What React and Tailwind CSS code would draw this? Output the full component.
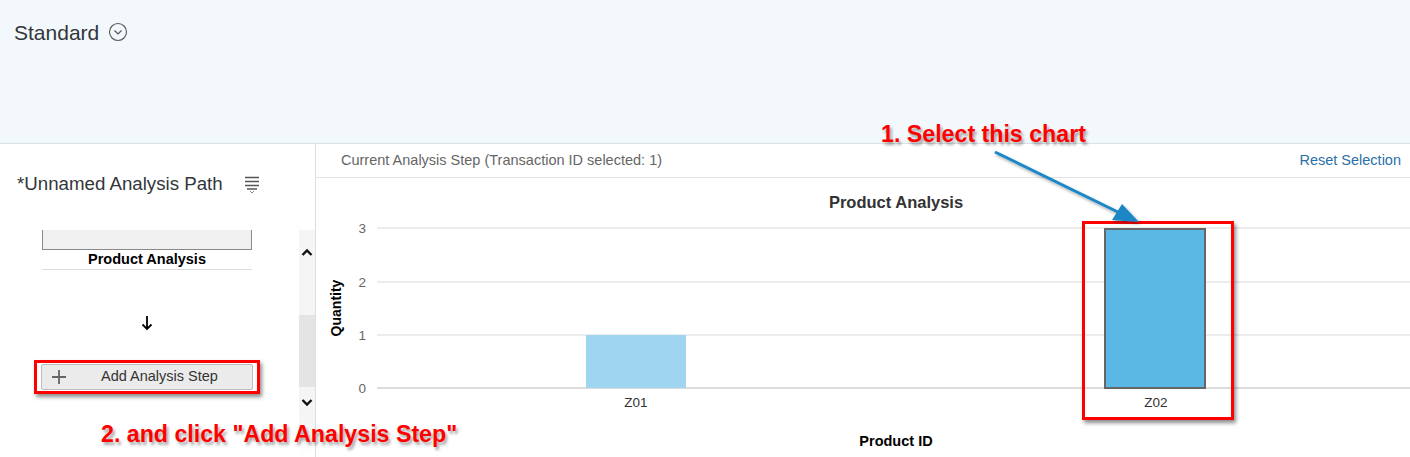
import React from 'react';

const font = "font-['Liberation_Sans',Arial,sans-serif]";

function ChevronCircle() {
  return (
    <svg width="20" height="20" viewBox="0 0 20 20" className="mt-[-2px]">
      <circle cx="10" cy="10" r="8.5" fill="none" stroke="#555" strokeWidth="1.1" />
      <path d="M6.5 8.5 L10 12 L13.5 8.5" fill="none" stroke="#555" strokeWidth="1.2" />
    </svg>
  );
}

function MenuIcon() {
  return (
    <svg width="16" height="18" viewBox="0 0 16 18">
      <path d="M1 1.5 H15 M1 5.5 H15 M1 9.5 H15 M3 13 H13" stroke="#555" strokeWidth="1.6" />
      <path d="M6 15 L8 17 L10 15" fill="none" stroke="#888" strokeWidth="1" />
    </svg>
  );
}

function Chart() {
  const grid = [
    { y: 50, v: '3' },
    { y: 104, v: '2' },
    { y: 157, v: '1' },
    { y: 210, v: '0' },
  ];
  return (
    <svg width="1094" height="279" className="block" fontFamily="'Liberation Sans', Arial, sans-serif">
      <text x="580" y="30" textAnchor="middle" fontSize="16.5" fontWeight="bold" fill="#333">Product Analysis</text>
      {grid.map(g => (
        <g key={g.v}>
          <line x1="61" x2="1094" y1={g.y} y2={g.y} stroke={g.v === '0' ? '#d0d0d0' : '#e6e6e6'} strokeWidth="1.5" />
          <text x="50" y={g.y + 5} textAnchor="end" fontSize="13.5" fill="#666">{g.v}</text>
        </g>
      ))}
      <rect x="270" y="157" width="100" height="53" fill="#9fd5f0" />
      <rect x="789" y="51" width="100" height="159" fill="#5bb8e4" stroke="#666" strokeWidth="2" />
      <text x="320" y="229" textAnchor="middle" fontSize="13.5" fill="#333">Z01</text>
      <text x="840" y="229" textAnchor="middle" fontSize="13.5" fill="#333">Z02</text>
      <text x="0" y="0" transform="translate(25 130) rotate(-90)" textAnchor="middle" fontSize="14" fontWeight="bold" fill="#000">Quantity</text>
      <text x="580" y="268" textAnchor="middle" fontSize="14.5" fontWeight="bold" fill="#000">Product ID</text>
    </svg>
  );
}

export default function App() {
  return (
    <div className={`relative w-[1410px] h-[457px] overflow-hidden bg-white ${font}`}>
      {/* header */}
      <div className="h-[144px] bg-[#f2f8fb] border-b border-[#dbe2e6] pl-[14px] pt-[21px]">
        <div className="flex items-center gap-[9px]">
          <span className="text-[21px] leading-[24px] text-[#32363a]">Standard</span>
          <ChevronCircle />
        </div>
      </div>

      <div className="flex h-[313px]">
        {/* left: analysis path */}
        <div className="w-[316px] border-r border-[#dedede] flex flex-col">
          <div className="pl-[17px] pt-[28px] flex items-center">
            <span className="text-[18.7px] leading-[24px] text-[#32363a]">*Unnamed Analysis Path</span>
            <span className="ml-[21px] mt-[2px]"><MenuIcon /></span>
          </div>
          <div className="mt-[34px] flex flex-1">
            <div className="flex-1 pl-[42px]">
              <div className="w-[210px] flex flex-col items-center">
                <div className="w-full h-[20px] bg-[#f0f0f0] border-x border-b border-[#8a8a8a]" />
                <div className="w-full h-[20px] border-b border-[#dddddd] text-center text-[14.5px] leading-[19px] font-bold text-black">
                  Product Analysis
                </div>
                <svg width="12" height="16" viewBox="0 0 12 16" className="mt-[45px]">
                  <path d="M6 1 V14 M1.5 9.5 L6 14 L10.5 9.5" fill="none" stroke="#000" strokeWidth="1.8" />
                </svg>
                <button className="mt-[33px] w-[212px] h-[26px] flex items-center bg-[#ebebeb] border border-[#bdbdbd] rounded-[2px] text-[14.5px] text-[#333]">
                  <svg width="16" height="16" viewBox="0 0 16 16" className="ml-[9px]">
                    <path d="M8 1 V15 M1 8 H15" stroke="#666" strokeWidth="1.8" />
                  </svg>
                  <span className="ml-[34px]">Add Analysis Step</span>
                </button>
              </div>
            </div>
            <div className="w-[16px] flex flex-col">
              <div className="h-[44px] bg-[#f5f5f5] flex items-center justify-center">
                <svg width="12" height="8" viewBox="0 0 12 8">
                  <path d="M1.5 7 L6 2.5 L10.5 7" fill="none" stroke="#111" strokeWidth="2.4" />
                </svg>
              </div>
              <div className="h-[41px] bg-[#f5f5f5]" />
              <div className="h-[72px] bg-[#e4e4e4]" />
              <div className="h-[32px] bg-[#f5f5f5] flex items-center justify-center">
                <svg width="12" height="8" viewBox="0 0 12 8">
                  <path d="M1.5 1 L6 5.5 L10.5 1" fill="none" stroke="#111" strokeWidth="2.4" />
                </svg>
              </div>
              <div className="flex-1 bg-gradient-to-b from-[#f5f5f5] to-white" />
            </div>
          </div>
        </div>

        {/* right: current step */}
        <div className="flex-1 flex flex-col">
          <div className="h-[34px] border-b border-[#e2e2e2] flex items-center justify-between pl-[25px] pr-[9px] text-[14.5px]">
            <span className="text-[#666]">Current Analysis Step (Transaction ID selected: 1)</span>
            <span className="text-[#2a6fa8]">Reset Selection</span>
          </div>
          <Chart />
        </div>
      </div>

      {/* annotations */}
      <div className="absolute left-[881px] top-[121px] text-[23.2px] leading-[27px] font-bold text-[#ff0000] [text-shadow:2px_3px_3px_rgba(0,0,0,0.35)]">
        1. Select this chart
      </div>
      <div className="absolute left-[101px] top-[421px] text-[23.2px] leading-[27px] font-bold text-[#ff0000] [text-shadow:2px_3px_3px_rgba(0,0,0,0.35)]">
        2. and click "Add Analysis Step"
      </div>
      <div className="absolute left-[34px] top-[360px] w-[226px] h-[34px] border-[3px] border-[#ff0000] shadow-[2px_3px_4px_rgba(0,0,0,0.45)]" />
      <div className="absolute left-[1082px] top-[221px] w-[152px] h-[199px] border-[3px] border-[#ff0000] shadow-[2px_3px_4px_rgba(0,0,0,0.45)]" />
      <svg className="absolute left-0 top-0 pointer-events-none" width="1410" height="457">
        <defs>
          <filter id="sh" x="-20%" y="-20%" width="140%" height="140%">
            <feDropShadow dx="1.5" dy="2" stdDeviation="1.5" floodColor="#000" floodOpacity="0.35" />
          </filter>
        </defs>
        <g filter="url(#sh)">
          <line x1="995" y1="152" x2="1122" y2="214" stroke="#1b87c6" strokeWidth="3" />
          <polygon points="1139,222 1112,220 1122,204" fill="#1b87c6" />
        </g>
      </svg>
    </div>
  );
}
